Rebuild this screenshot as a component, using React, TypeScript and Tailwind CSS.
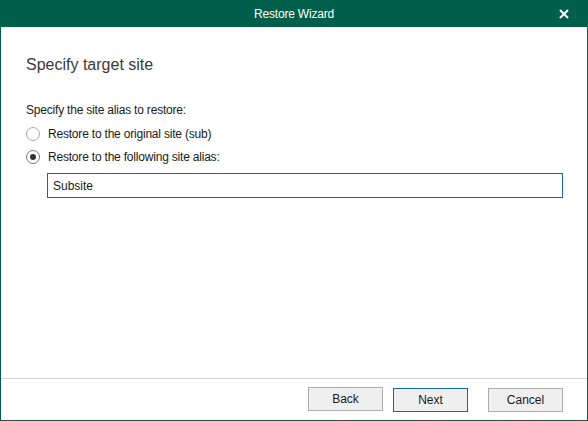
import { FC, useState } from "react"

const font = { fontFamily: "\"Liberation Sans\", Arial, sans-serif" }

const Radio: FC<{ checked: boolean, label: string, onSelect: () => void }> = props =>
{
    const { checked, label, onSelect } = props

    return (
        <div className="flex h-[23px] items-center gap-2 cursor-default" onClick={ onSelect }>
            <span className={ `flex size-[14px] items-center justify-center rounded-full border bg-white ${ checked ? "border-[#7a7a7a]" : "border-[#a8a8a8]" }` }>
                { checked && <span className="size-[6px] rounded-full bg-[#333333]" /> }
            </span>
            <span className="text-[12px] tracking-[-0.2px] text-[#1a1a1a]">{ label }</span>
        </div>
    )
}

const WizardButton: FC<{ label: string, primary?: boolean }> = props =>
{
    const { label, primary = false } = props

    return (
        <button className={ `h-[24px] w-[75px] border bg-[#efefef] text-[12px] text-[#1a1a1a] ${ primary ? "border-[#1666ab]" : "border-[#adadad]" }` }>
            { label }
        </button>
    )
}

export default function App()
{
    const [ option, setOption ] = useState<number>(1)
    const [ alias, setAlias ] = useState<string>("Subsite")

    return (
        <div className="flex h-[421px] w-[588px] flex-col bg-[#005f4b] px-px pb-px" style={ font }>
            <div className="relative flex h-[27px] shrink-0 items-center justify-center">
                <span className="text-[12px] tracking-[-0.2px] text-white">Restore Wizard</span>
                <svg className="absolute right-[18px] top-[9px]" width="10" height="10" viewBox="0 0 10 10">
                    <path d="M1 1 L9 9 M9 1 L1 9" stroke="#ffffff" strokeWidth="2" />
                </svg>
            </div>
            <div className="flex flex-1 flex-col bg-white">
                <div className="flex flex-1 flex-col pl-[25px] pt-[27px]">
                    <h1 className="text-[16px] font-light leading-[22px] text-[#3a3a3a]">Specify target site</h1>
                    <p className="mt-[26px] text-[12px] leading-[16px] tracking-[-0.2px] text-[#1a1a1a]">Specify the site alias to restore:</p>
                    <div className="mt-[4px] flex flex-col">
                        <Radio checked={ option === 0 } label="Restore to the original site (sub)" onSelect={ () => setOption(0) } />
                        <Radio checked={ option === 1 } label="Restore to the following site alias:" onSelect={ () => setOption(1) } />
                    </div>
                    <input
                        className="ml-[21px] mt-[5px] h-[25px] w-[516px] border border-[#1666ab] px-[5px] text-[12px] text-[#1a1a1a] outline-none"
                        value={ alias }
                        onChange={ e => setAlias(e.target.value) } />
                </div>
                <div className="flex h-[42px] shrink-0 items-start justify-end border-t border-[#d5d5d5] pr-[24px] pt-[8px]">
                    <WizardButton label="Back" />
                    <div className="ml-[10px]"><WizardButton label="Next" primary /></div>
                    <div className="ml-[20px]"><WizardButton label="Cancel" /></div>
                </div>
            </div>
        </div>
    )
}
